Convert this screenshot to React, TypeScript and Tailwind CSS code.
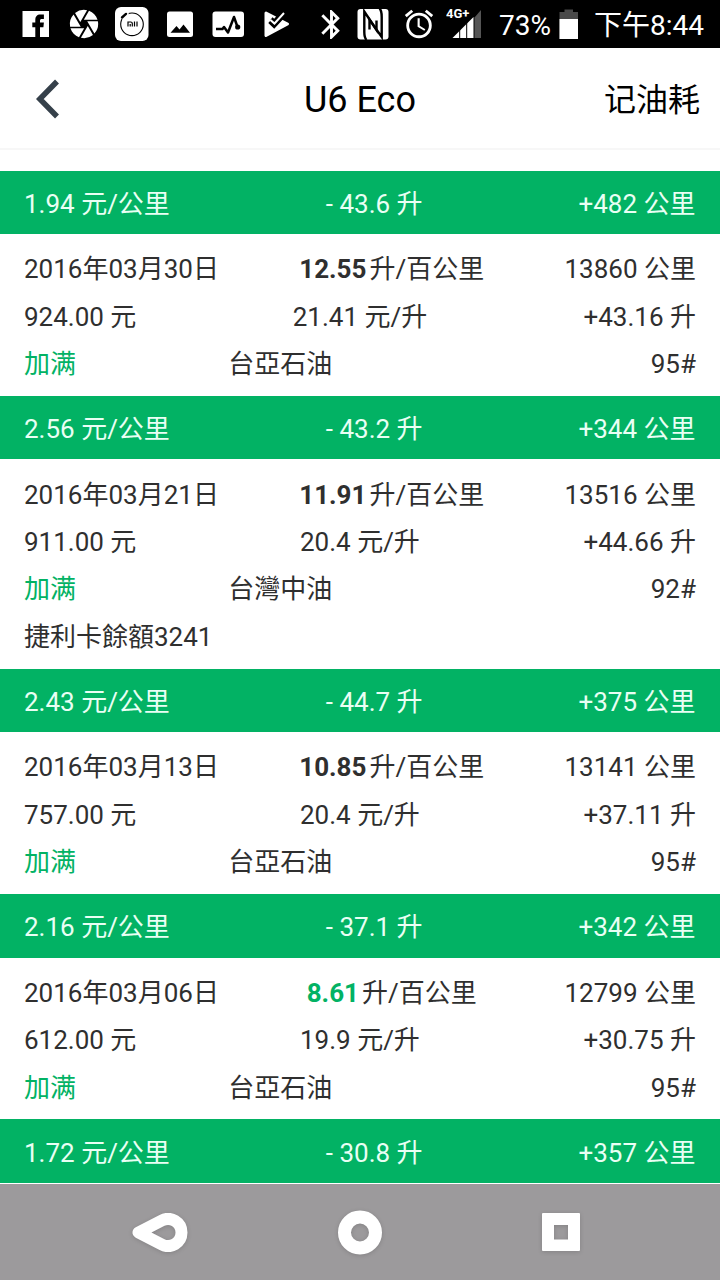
import type { ReactNode } from "react";
import { MdAlarm, MdBluetooth, MdCamera } from "react-icons/md";

type FuelRecord = {
  date: string;
  consumption: string;
  best?: boolean;
  odometer: string;
  cost: string;
  price: string;
  volume: string;
  station: string;
  grade: string;
  note?: string;
};

type Summary = {
  costPerKm: string;
  used: string;
  distance: string;
};

const entries: { summary: Summary; record?: FuelRecord }[] = [
  {
    summary: { costPerKm: "1.94 元/公里", used: "- 43.6 升", distance: "+482 公里" },
    record: {
      date: "2016年03月30日",
      consumption: "12.55",
      odometer: "13860 公里",
      cost: "924.00 元",
      price: "21.41 元/升",
      volume: "+43.16 升",
      station: "台亞石油",
      grade: "95#",
    },
  },
  {
    summary: { costPerKm: "2.56 元/公里", used: "- 43.2 升", distance: "+344 公里" },
    record: {
      date: "2016年03月21日",
      consumption: "11.91",
      odometer: "13516 公里",
      cost: "911.00 元",
      price: "20.4 元/升",
      volume: "+44.66 升",
      station: "台灣中油",
      grade: "92#",
      note: "捷利卡餘額3241",
    },
  },
  {
    summary: { costPerKm: "2.43 元/公里", used: "- 44.7 升", distance: "+375 公里" },
    record: {
      date: "2016年03月13日",
      consumption: "10.85",
      odometer: "13141 公里",
      cost: "757.00 元",
      price: "20.4 元/升",
      volume: "+37.11 升",
      station: "台亞石油",
      grade: "95#",
    },
  },
  {
    summary: { costPerKm: "2.16 元/公里", used: "- 37.1 升", distance: "+342 公里" },
    record: {
      date: "2016年03月06日",
      consumption: "8.61",
      best: true,
      odometer: "12799 公里",
      cost: "612.00 元",
      price: "19.9 元/升",
      volume: "+30.75 升",
      station: "台亞石油",
      grade: "95#",
    },
  },
  {
    summary: { costPerKm: "1.72 元/公里", used: "- 30.8 升", distance: "+357 公里" },
  },
];

function StatusBar() {
  return (
    <div className="flex h-12 shrink-0 items-center bg-black pl-3 text-[28px] leading-none text-white">
      <svg className="size-12" viewBox="0 0 48 48">
        <path fill="#fff" d="M10.5 11H37v26H10.5z" />
        <path
          fill="#000"
          d="M23.3 37V27.2h-3v-4.6h3v-2.4c0-3.8 1.8-5.6 5-5.6h3.6v4.3h-2c-1.4 0-1.9.5-1.9 1.9v1.8h3.9l-.5 4.6H28V37z"
        />
      </svg>
      <div className="flex size-12 items-center justify-center">
        <MdCamera size={34} />
      </div>
      <svg className="size-12" viewBox="0 0 48 48">
        <rect x="7" y="7" width="33.5" height="34" rx="6" fill="#fff" />
        <circle cx="24" cy="24.3" r="11.3" fill="none" stroke="#000" strokeWidth="1.1" />
        <path d="M12.8 18l6.5-6" stroke="#fff" strokeWidth="5" />
        <path d="M14 17.5l4-3.6" stroke="#000" strokeWidth="2.4" strokeLinecap="round" />
        <path
          d="M20 26.5V22h2.8q1.5 0 1.5 1.5v3M22.2 24v2.5M26.5 21.5v5M29 21.5v5"
          fill="none"
          stroke="#000"
          strokeWidth="1.2"
        />
      </svg>
      <svg className="size-12" viewBox="0 0 48 48">
        <rect x="11" y="11.5" width="26" height="25.5" rx="2.5" fill="#fff" />
        <path d="M14.5 32.8l6-6.8 3 3.5 4-5 6.5 8.3z" fill="#000" />
      </svg>
      <svg className="size-12" viewBox="0 0 48 48">
        <rect x="8.5" y="11.5" width="31.5" height="25.5" rx="3" fill="#fff" />
        <path
          d="M12 29h6.5l1.5-2 4 5.5L30 17l3.5 10"
          fill="none"
          stroke="#000"
          strokeWidth="2.5"
          strokeLinejoin="round"
        />
        <circle cx="33.7" cy="27" r="2.6" fill="#000" />
      </svg>
      <svg className="size-12" viewBox="0 0 48 48">
        <path
          d="M14 13l21.5 11L14 35.5z"
          fill="#fff"
          stroke="#fff"
          strokeWidth="3"
          strokeLinejoin="round"
        />
        <path d="M19.5 18.5l3 2.5L30 11.5" fill="none" stroke="#000" strokeWidth="3" />
        <path d="M17.3 21.8l4.9 4.7L33.5 14.5" fill="none" stroke="#000" strokeWidth="3" />
        <path d="M18.5 20l4 3.5L32 13" fill="none" stroke="#fff" strokeWidth="2" />
      </svg>

      <MdBluetooth size={35} className="ml-3.5 shrink-0" />
      <svg className="ml-2 h-12 w-8 shrink-0" viewBox="0 0 32 48">
        <rect x=".5" y="9" width="31" height="30.5" rx="3" fill="#fff" />
        <path
          d="M9.5 40C7.5 38 7.3 35 7.3 32V11.5L19.5 30v-9.500"
          fill="none"
          stroke="#000"
          strokeWidth="2.4"
        />
        <path
          d="M22.5 8.5c2.200 2 2.200 4.500 2.200 8.500v20L12.500 19.500v10"
          fill="none"
          stroke="#000"
          strokeWidth="2.4"
        />
      </svg>
      <MdAlarm size={34} className="ml-[13px] shrink-0" />
      <svg className="ml-[10px] h-12 w-9 shrink-0" viewBox="0 0 36 48">
        <path d="M28.5 17.5L35 10v28h-6.5z" fill="#555" />
        <path d="M6.5 38l21-21v21z" fill="#fff" />
        <path d="M13.7 20v19M20.7 20v19" stroke="#000" strokeWidth="1" />
        <text x="0" y="18" fill="#fff" className="font-['Roboto'] text-[13px] font-bold">
          4G+
        </text>
      </svg>
      <span className="ml-[17px] pt-[3px]">73%</span>
      <svg className="ml-2 h-12 w-5 shrink-0" viewBox="0 0 20 48">
        <path d="M5.5 9.500H14V12h5v27H.5V12h5z" fill="#4a4a4a" />
        <path d="M.5 19H19v20H.5z" fill="#fff" />
      </svg>
      <span className="ml-[15px] pt-[3px] whitespace-nowrap">下午8:44</span>
    </div>
  );
}

function Header() {
  return (
    <div className="grid h-[102px] shrink-0 grid-cols-3 items-center border-b-2 border-[#f7f7f7] pr-5 pl-9 text-black">
      <svg className="mt-0.5 h-10 w-6" viewBox="0 0 24 40">
        <path d="M21 2.5L3.8 20 21 37.5" fill="none" stroke="#35404a" strokeWidth="5.5" />
      </svg>
      <h1 className="pt-1 pr-4 text-center text-4xl">U6 Eco</h1>
      <button className="pt-[3px] text-right text-[32px]">记油耗</button>
    </div>
  );
}

function Row({ children }: { children: ReactNode }) {
  return <div className="flex h-[47.4px] items-center justify-between">{children}</div>;
}

function SummaryBand({ summary }: { summary: Summary }) {
  return (
    <div className="flex h-[63.5px] items-center justify-between bg-[#02b264] px-6 pt-[3px] pr-[24.5px] text-[#e9fff4]">
      <span>{summary.costPerKm}</span>
      <span>{summary.used}</span>
      <span>{summary.distance}</span>
    </div>
  );
}

function RecordCard({ record }: { record: FuelRecord }) {
  return (
    <div className="px-6 pt-[11.5px] pb-[8.2px]">
      <Row>
        <span>{record.date}</span>
        <span>
          <b className={record.best ? "mr-[3px] text-[#02b264]" : "mr-[3px]"}>{record.consumption}</b>
          升/百公里
        </span>
        <span>{record.odometer}</span>
      </Row>
      <Row>
        <span>{record.cost}</span>
        <span>{record.price}</span>
        <span>{record.volume}</span>
      </Row>
      <Row>
        <span className="text-[#02b264]">加满</span>
        <span>{record.station}</span>
        <span className="w-3.5" />
        <span>{record.grade}</span>
      </Row>
      {record.note && (
        <Row>
          <span>{record.note}</span>
        </Row>
      )}
    </div>
  );
}

function NavBar() {
  return (
    <div className="grid h-24 shrink-0 grid-cols-3 place-items-center bg-[#9c9a9c] px-[60px]">
      <svg className="h-12 w-14 drop-shadow-sm" viewBox="0 0 56 48">
        <path
          d="M6.5 24.5l23.300-12A13.500 13.500 0 1 1 29.800 36.500z"
          fill="none"
          stroke="#fff"
          strokeWidth="12"
          strokeLinejoin="round"
        />
      </svg>
      <svg className="size-12 drop-shadow-sm" viewBox="0 0 48 48">
        <circle cx="24" cy="24.5" r="15.5" fill="none" stroke="#fff" strokeWidth="13" />
      </svg>
      <svg className="size-12 drop-shadow-sm" viewBox="0 0 48 48">
        <path
          d="M7 5h36a1 1 0 0 1 1 1v36a1 1 0 0 1-1 1H7a1 1 0 0 1-1-1V6a1 1 0 0 1 1-1zM18 17v14.500h14V17z"
          fill="#fff"
          fillRule="evenodd"
        />
      </svg>
    </div>
  );
}

export default function App() {
  return (
    <div className="flex h-[1280px] w-[720px] flex-col overflow-hidden bg-white font-['Roboto','Noto_Sans_CJK_SC',sans-serif]">
      <StatusBar />
      <Header />
      <div className="min-h-0 flex-1 overflow-hidden pt-[20.6px] text-[26px] leading-none text-[#2f2f2f]">
        {entries.map((entry) => (
          <div key={entry.summary.costPerKm}>
            <SummaryBand summary={entry.summary} />
            {entry.record && <RecordCard record={entry.record} />}
          </div>
        ))}
      </div>
      <NavBar />
    </div>
  );
}
